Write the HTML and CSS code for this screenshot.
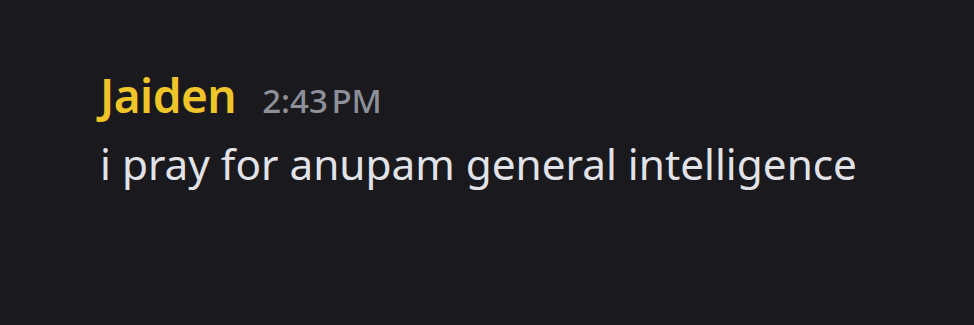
FILE: index.html
```html
<!DOCTYPE html>
<html>
<head>
<meta charset="utf-8">
<link rel="stylesheet" href="styles.css">
</head>
<body>
<div class="message">
  <div class="header">
    <span class="username">Jaiden</span>
    <span class="timestamp">2:43 PM</span>
  </div>
  <div class="content">i pray for anupam general intelligence</div>
</div>
</body>
</html>
```
FILE: styles.css
```css
html, body {
  margin: 0;
  padding: 0;
  background: #1a1a1e;
  width: 974px;
  height: 325px;
  overflow: hidden;
}
.message {
  padding: 67px 0 0 100px;
  font-family: "Noto Sans", sans-serif;
}
.header {
  display: flex;
  align-items: baseline;
  gap: 26px;
  line-height: 56px;
}
.username {
  color: #f0c52a;
  font-size: 46px;
  font-weight: 600;
  letter-spacing: -0.5px;
}
.timestamp {
  color: #8e9099;
  font-size: 33px;
  font-weight: 500;
  word-spacing: -5px;
}
.content {
  margin-top: 7px;
  color: #e2e3e8;
  font-size: 42.3px;
  line-height: 56px;
}
```
